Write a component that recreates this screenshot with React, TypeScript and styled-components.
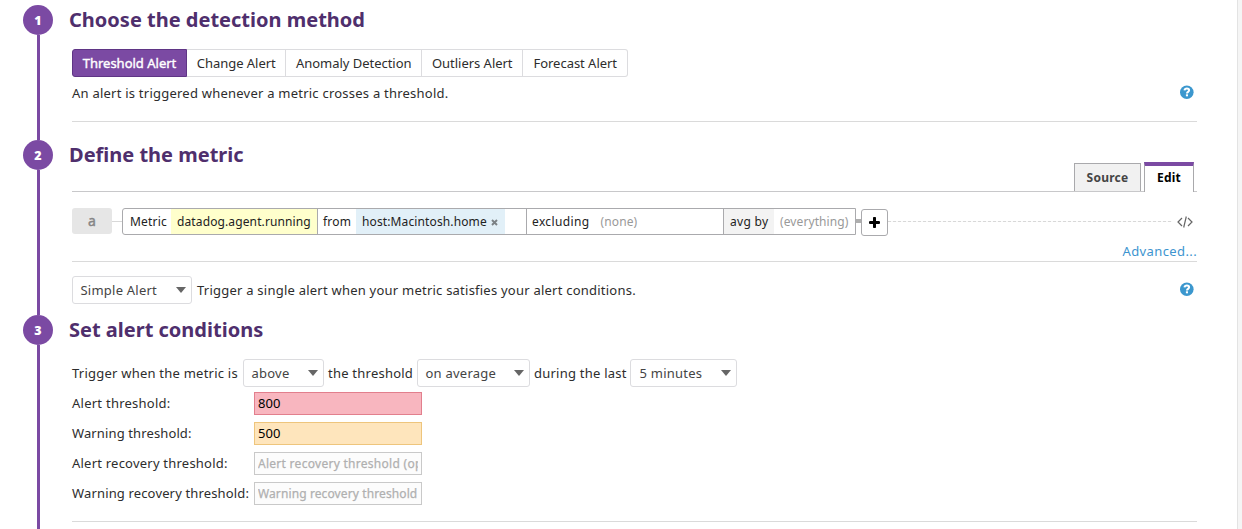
import React from 'react';
import styled, { createGlobalStyle } from 'styled-components';

const Global = createGlobalStyle`
  * { box-sizing: border-box; }
  body { margin: 0; background: #fff; overflow: hidden; }
`;

const Page = styled.div`
  height: 529px;
  display: flex;
  overflow: hidden;
  font: 13px/20px 'Noto Sans', 'Open Sans', sans-serif;
  letter-spacing: 0.23px;
  color: #2d2d2d;
`;
const Panel = styled.main`
  width: 1238px;
  padding: 5px 40px 0 23px;
  border-right: 1px solid #e3e3e3;
`;
const Gutter = styled.div`
  flex: 1;
  background: #f5f5f5;
`;
const Section = styled.section<{ $h: number }>`
  display: flex;
  height: ${p => p.$h}px;
`;
const Rail = styled.div`
  width: 30px;
  margin-right: 19px;
  display: flex;
  flex-direction: column;
  align-items: center;
`;
const Step = styled.div`
  width: 30px;
  height: 30px;
  flex: none;
  border-radius: 50%;
  background: #7b4aa3;
  color: #fff;
  font: 800 12.5px/31px 'Open Sans', sans-serif;
  letter-spacing: 0;
  text-align: center;
`;
const Line = styled.div`
  width: 3px;
  flex: 1;
  margin-left: 1px;
  background: #7b4aa3;
`;
const Body = styled.div`
  flex: 1;
  min-width: 0;
`;
const Title = styled.h2`
  margin: 0 0 0 -3px;
  height: 30px;
  font: 700 20px/29px 'Noto Sans', sans-serif;
  letter-spacing: 0;
  color: #4f2f6d;
`;
const Rule = styled.div`
  height: 1px;
  background: #dadada;
`;

const Segments = styled.div`
  display: flex;
  width: 556px;
  height: 28px;
  margin-top: 14px;
`;
const Segment = styled.button<{ $w: number; $on?: boolean }>`
  width: ${p => p.$w}px;
  padding: 0 0 0 ${p => (p.$on ? 0 : 0.5)}px;
  border: 1px solid ${p => (p.$on ? '#5f3585' : '#dcdcdf')};
  border-left-width: ${p => (p.$on ? 1 : 0)}px;
  background: ${p => (p.$on ? '#7b4aa3' : '#fff')};
  color: ${p => (p.$on ? '#fff' : '#2d2d2d')};
  -webkit-text-stroke: ${p => (p.$on ? '0.4px #fff' : '0')};
  font: inherit;
  letter-spacing: ${p => (p.$on ? 0 : -0.03)}px;
  text-align: center;
  &:first-child { border-radius: 3px 0 0 3px; }
  &:last-child { border-radius: 0 3px 3px 0; }
`;
const HelpRow = styled.div<{ $h: number; $mt: number; $mb?: number }>`
  display: flex;
  align-items: center;
  justify-content: space-between;
  height: ${p => p.$h}px;
  margin-top: ${p => p.$mt}px;
  margin-bottom: ${p => p.$mb ?? 0}px;
  padding-right: 3px;
`;
const Help = styled.svg`
  display: block;
  width: 14px;
  height: 14px;
  flex: none;
  margin-top: -2px;
`;

const MetricTabs = styled.div`
  display: flex;
  justify-content: flex-end;
  align-items: flex-end;
  height: 30px;
  margin-top: -8px;
  padding-right: 3px;
  gap: 3px;
  border-bottom: 1px solid #c8c8ca;
`;
const MetricTab = styled.div<{ $on?: boolean }>`
  width: ${p => (p.$on ? 50 : 67)}px;
  height: ${p => (p.$on ? 30 : 28)}px;
  margin-bottom: ${p => (p.$on ? -1 : 0)}px;
  border: 1px solid #a9a9ac;
  border-bottom: 0;
  border-top: ${p => (p.$on ? '4px solid #7b4aa3' : '1px solid #a9a9ac')};
  background: ${p => (p.$on ? '#fff' : '#f1f1f1')};
  color: ${p => (p.$on ? '#000' : '#444')};
  font-size: 12px;
  font-weight: 700;
  line-height: ${p => (p.$on ? 23 : 28)}px;
  text-align: center;
`;

const Query = styled.div`
  display: flex;
  align-items: center;
  height: 28px;
  margin-top: 16px;
  font-size: 12px;
  padding-bottom: 1px;
`;
const Letter = styled.div`
  width: 40px;
  height: 26px;
  margin-bottom: 1px;
  border-radius: 3px;
  background: #e6e6e6;
  color: #858585;
  -webkit-text-stroke: 0.4px #858585;
  font-size: 14px;
  line-height: 25px;
  text-align: center;
`;
const Link = styled.div<{ $thick?: boolean }>`
  width: ${p => (p.$thick ? 5 : 10)}px;
  height: ${p => (p.$thick ? 4 : 1)}px;
  margin-bottom: 1px;
  background: ${p => (p.$thick ? '#aeaeae' : '#d8d8d8')};
`;
const QueryBox = styled.div`
  display: flex;
  width: 734px;
  height: 27px;
  border: 1px solid #aaaaad;
  border-radius: 3px 0 0 3px;
  line-height: 25px;
`;
const Cell = styled.div<{ $w: number; $pad?: number; $bg?: string; $end?: boolean; $muted?: boolean; $ls?: number }>`
  width: ${p => p.$w}px;
  flex: none;
  padding-left: ${p => p.$pad ?? 0}px;
  white-space: nowrap;
  background: ${p => p.$bg ?? 'transparent'};
  border-right: ${p => (p.$end ? '1px solid #aaaaad' : '0')};
  color: ${p => (p.$muted ? '#999' : '#222')};
  letter-spacing: ${p => p.$ls ?? 0.3}px;
`;
const Remove = styled.svg`
  width: 7px;
  height: 7px;
  margin: 0 0 0 4px;
`;
const AddButton = styled.button`
  display: flex;
  align-items: center;
  justify-content: center;
  width: 27px;
  height: 27px;
  margin-top: 2px;
  padding: 0;
  border: 1px solid #aaaaad;
  border-radius: 3px;
  background: #fff;
`;
const Dashes = styled.div`
  width: 284px;
  height: 1px;
  margin: 0 5px 1px 0;
  background: repeating-linear-gradient(90deg, #d8d8d8 0 3px, #fafafa 3px 5px);
`;
const Advanced = styled.div`
  height: 25px;
  padding-top: 5px;
  text-align: right;
  letter-spacing: 0.38px;
  color: #3d94cf;
`;

const Inline = styled.div<{ $mt?: number }>`
  display: flex;
  align-items: center;
  height: 28px;
  margin-top: ${p => p.$mt ?? 0}px;
`;
const Select = styled.div<{ $w: number; $pad?: number }>`
  display: flex;
  align-items: center;
  justify-content: space-between;
  width: ${p => p.$w}px;
  height: 28px;
  padding: 0 5.5px 0 ${p => p.$pad ?? 7.5}px;
  border: 1px solid #dcdcdf;
  border-radius: 3px;
  color: #444;
  &::after {
    content: '';
    border: 5px solid transparent;
    border-top: 6px solid #666;
    border-bottom: 0;
  }
`;
const Words = styled.span<{ $w: number; $pad?: number }>`
  width: ${p => p.$w}px;
  padding-left: ${p => p.$pad ?? 0}px;
  white-space: nowrap;
`;
const Fields = styled.div`
  display: grid;
  grid-template-columns: 182px 168px;
  grid-auto-rows: 23px;
  row-gap: 7px;
  align-items: center;
  margin: 5px 0 16px;
`;
const Label = styled.label<{ $ls?: number }>`
  padding-bottom: 2px;
  letter-spacing: ${p => p.$ls ?? 0.25}px;
  white-space: nowrap;
`;
const tones = {
  alert: ['#f8b6bf', '#e27f8d'],
  warn: ['#fee5bc', '#eec57c'],
  plain: ['#fcfcfc', '#c9c9c9'],
};
const Field = styled.input<{ $tone: keyof typeof tones; $ls?: number }>`
  width: 168px;
  height: 23px;
  padding: 0 3px ${p => (p.$tone === 'plain' ? 0 : 2)}px;
  border: 1px solid ${p => tones[p.$tone][1]};
  border-radius: 0;
  background: ${p => tones[p.$tone][0]};
  color: #000;
  font: ${p => (p.$tone === 'plain' ? 12 : 13)}px 'Noto Sans', sans-serif;
  letter-spacing: ${p => p.$ls ?? 0.1}px;
  &::placeholder { color: #b0b0b0; -webkit-text-stroke: 0.25px #b0b0b0; }
`;

const HelpIcon = () => (
  <Help viewBox="0 0 14 14">
    <circle cx="6.8" cy="7.2" r="6.8" fill="#3b97ce" />
    <path d="M4.5 5.4C4.7 4.1 5.6 3.6 6.9 3.6c1.3 0 2.2.6 2.2 1.7 0 1.6-2.1 1.5-2.1 3.1" fill="none" stroke="#fff" strokeWidth="2" />
    <rect x="5.9" y="9.3" width="2.1" height="2" fill="#fff" />
  </Help>
);

export default function App() {
  return (
    <Page>
      <Global />
      <Panel>
        <Section $h={135}>
          <Rail><Step>1</Step><Line /></Rail>
          <Body>
            <Title>Choose the detection method</Title>
            <Segments>
              <Segment $w={115} $on>Threshold Alert</Segment>
              <Segment $w={99}>Change Alert</Segment>
              <Segment $w={136}>Anomaly Detection</Segment>
              <Segment $w={101}>Outliers Alert</Segment>
              <Segment $w={105}>Forecast Alert</Segment>
            </Segments>
            <HelpRow $h={32} $mt={0} $mb={12}>
              <Words $w={400}>An alert is triggered whenever a metric crosses a threshold.</Words>
              <HelpIcon />
            </HelpRow>
            <Rule />
          </Body>
        </Section>
        <Section $h={175}>
          <Rail><Step>2</Step><Line /></Rail>
          <Body>
            <Title>Define the metric</Title>
            <MetricTabs>
              <MetricTab>Source</MetricTab>
              <MetricTab $on>Edit</MetricTab>
            </MetricTabs>
            <Query>
              <Letter>a</Letter>
              <Link />
              <QueryBox>
                <Cell $w={48} $pad={7} $ls={0.2}>Metric</Cell>
                <Cell $w={147} $pad={6} $bg="#ffffcc" $ls={0.12} $end>datadog.agent.running</Cell>
                <Cell $w={38} $pad={5} $ls={0.2}>from</Cell>
                <Cell $w={149} $pad={6} $bg="#e2f0f8" $ls={0.12}>
                  host:Macintosh.home
                  <Remove viewBox="0 0 7 7"><path d="M1 1l5 5M6 1 1 6" stroke="#7b8185" strokeWidth="1.9" /></Remove>
                </Cell>
                <Cell $w={22} $end />
                <Cell $w={68} $pad={5} $ls={0.36}>excluding</Cell>
                <Cell $w={129} $pad={5.5} $ls={0.12} $muted $end>(none)</Cell>
                <Cell $w={50} $pad={6} $bg="#f3f3f3">avg by</Cell>
                <Cell $w={81} $pad={6} $ls={0.1} $muted>(everything)</Cell>
              </QueryBox>
              <Link $thick />
              <AddButton>
                <svg width="11" height="11" viewBox="0 0 11 11"><path d="M5.5 1.2v8.6M1.2 5.5h8.6" stroke="#000" strokeWidth="3" strokeLinecap="round" /></svg>
              </AddButton>
              <Dashes />
              <svg width="16" height="12" viewBox="0 0 16 12" fill="none" stroke="#666" strokeWidth="1.2"><path d="M5 2 1 6l4 4M11 2l4 4-4 4M9.3.5 6.7 11.5" /></svg>
            </Query>
            <Advanced>Advanced...</Advanced>
            <Rule />
            <HelpRow $h={28} $mt={14}>
              <Inline>
                <Select $w={120}>Simple Alert</Select>
                <Words $w={500} $pad={5}>Trigger a single alert when your metric satisfies your alert conditions.</Words>
              </Inline>
              <HelpIcon />
            </HelpRow>
          </Body>
        </Section>
        <Section $h={214}>
          <Rail><Step>3</Step><Line /></Rail>
          <Body>
            <Title>Set alert conditions</Title>
            <Inline $mt={14}>
              <Words $w={171}>Trigger when the metric is</Words>
              <Select $w={81}>above</Select>
              <Words $w={93} $pad={4}>the threshold</Words>
              <Select $w={113}>on average</Select>
              <Words $w={100} $pad={4}>during the last</Words>
              <Select $w={107} $pad={8.5}>5 minutes</Select>
            </Inline>
            <Fields>
              <Label>Alert threshold:</Label><Field $tone="alert" defaultValue="800" />
              <Label $ls={0.12}>Warning threshold:</Label><Field $tone="warn" defaultValue="500" />
              <Label $ls={0.22}>Alert recovery threshold:</Label><Field $tone="plain" $ls={0.28} placeholder="Alert recovery threshold (optional)" />
              <Label $ls={0.15}>Warning recovery threshold:</Label><Field $tone="plain" $ls={0.11} placeholder="Warning recovery threshold (optional)" />
            </Fields>
            <Rule />
          </Body>
        </Section>
      </Panel>
      <Gutter />
    </Page>
  );
}
